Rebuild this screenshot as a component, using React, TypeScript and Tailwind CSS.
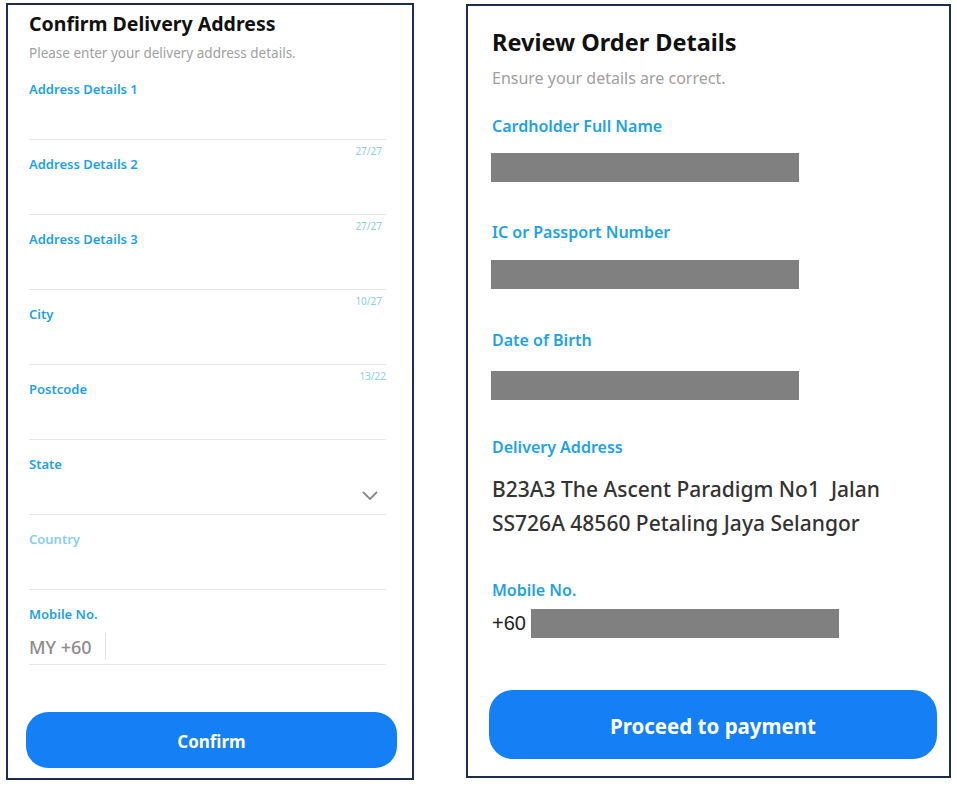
import { ReactNode } from "react";

type Field = {
  label: string;
  counter?: string;
  counterPad?: string;
  muted?: boolean;
  kind?: "select" | "phone";
};

const fields: Field[] = [
  { label: "Address Details 1", counter: "27/27", counterPad: "pr-[4px]" },
  { label: "Address Details 2", counter: "27/27", counterPad: "pr-[4px]" },
  { label: "Address Details 3", counter: "10/27", counterPad: "pr-[4px]" },
  { label: "City", counter: "13/22", counterPad: "pr-0" },
  { label: "Postcode" },
  { label: "State", kind: "select" },
  { label: "Country", muted: true },
  { label: "Mobile No.", kind: "phone" },
];

const Chevron = () => (
  <svg width="16" height="10" viewBox="0 0 16 10" fill="none">
    <path
      d="M1.5 1.5 8 8l6.5-6.5"
      stroke="#8a8a8a"
      strokeWidth="1.8"
      strokeLinecap="round"
      strokeLinejoin="round"
    />
  </svg>
);

const AddressField = ({ field }: { field: Field }) => {
  let input: ReactNode = null;
  if (field.kind === "select") {
    input = (
      <div className="flex h-full items-end justify-end pb-[13px] pr-[8px]">
        <Chevron />
      </div>
    );
  } else if (field.kind === "phone") {
    input = (
      <div className="flex h-full items-center pt-[6px]">
        <span className="text-[18px] leading-[20px] font-medium text-[#8c8c8c]">
          MY +60
        </span>
        <span className="ml-[13px] h-[27px] w-px bg-[#e3e3e3]" />
      </div>
    );
  }

  return (
    <div className="flex flex-col">
      <label
        className={
          field.muted
            ? "text-[13px] leading-[17px] font-semibold text-[#8acdf0]"
            : "text-[13px] leading-[17px] font-semibold text-[#1ea2e4]"
        }
      >
        {field.label}
      </label>
      <div className="h-[42px] border-b border-[#e6e6e6]">{input}</div>
      <div
        className={`h-[16px] pt-[6px] text-right text-[10px] leading-[10px] text-[#8dcdee] ${
          field.counterPad ?? ""
        }`}
      >
        {field.counter}
      </div>
    </div>
  );
};

const Redacted = ({ className }: { className: string }) => (
  <div className={`bg-[#808080] ${className}`} />
);

const ConfirmAddress = () => (
  <div className="flex h-[777px] w-[408px] flex-col border-2 border-[#1f2d52] bg-white pl-[21px] pr-[26px] pt-[5px]">
    <h2 className="text-[19.5px] leading-[28px] font-bold text-[#111]">
      Confirm Delivery Address
    </h2>
    <p className="mt-[6px] text-[13.5px] leading-[18px] text-[#a0a0a0]">
      Please enter your delivery address details.
    </p>
    <div className="mt-[19px] flex flex-col">
      {fields.map((f) => (
        <AddressField key={f.label} field={f} />
      ))}
    </div>
    <button className="ml-[-3px] mt-[31px] h-[56px] w-[371px] rounded-[22px] bg-[#1580f6] pt-[3px] text-[17px] font-bold text-white">
      Confirm
    </button>
  </div>
);

const ReviewLabel = ({ children, className }: { children: ReactNode; className: string }) => (
  <div className={`text-[16px] leading-[20px] font-semibold text-[#1ea2e4] ${className}`}>
    {children}
  </div>
);

const ReviewOrder = () => (
  <div className="flex h-[774px] w-[485px] flex-col border-2 border-[#1f2d52] bg-white pl-[24px] pt-[20px]">
    <h2 className="text-[23.5px] leading-[32px] font-bold text-[#111]">
      Review Order Details
    </h2>
    <p className="mt-[10px] text-[16px] leading-[20px] text-[#a0a0a0]">
      Ensure your details are correct.
    </p>

    <ReviewLabel className="mt-[28px]">Cardholder Full Name</ReviewLabel>
    <Redacted className="ml-[-1px] mt-[17px] h-[29px] w-[308px]" />

    <ReviewLabel className="mt-[40px]">IC or Passport Number</ReviewLabel>
    <Redacted className="ml-[-1px] mt-[18px] h-[29px] w-[308px]" />

    <ReviewLabel className="mt-[41px]">Date of Birth</ReviewLabel>
    <Redacted className="ml-[-1px] mt-[21px] h-[29px] w-[308px]" />

    <ReviewLabel className="mt-[37px]">Delivery Address</ReviewLabel>
    <p className="mt-[15px] w-[420px] text-[21px] leading-[34px] font-medium text-[#333]">
      B23A3 The Ascent Paradigm No1&nbsp; Jalan SS726A 48560 Petaling Jaya Selangor
    </p>

    <ReviewLabel className="mt-[40px]">Mobile No.</ReviewLabel>
    <div className="mt-[9px] flex h-[29px] items-center">
      <span className="pr-[5px] font-['Liberation_Sans',Arial,sans-serif] text-[20px] leading-[29px] text-[#222]">
        +60
      </span>
      <Redacted className="h-[29px] w-[308px]" />
    </div>

    <button className="ml-[-3px] mt-[52px] h-[69px] w-[448px] rounded-[24px] bg-[#1580f6] pt-[3px] text-[20.5px] font-bold text-white">
      Proceed to payment
    </button>
  </div>
);

export default function App() {
  return (
    <div className="flex min-h-[788px] w-[957px] items-start bg-white font-['Noto_Sans','Lato',sans-serif]">
      <div className="ml-[6px] mt-[3px]">
        <ConfirmAddress />
      </div>
      <div className="ml-[52px] mt-[4px]">
        <ReviewOrder />
      </div>
    </div>
  );
}
